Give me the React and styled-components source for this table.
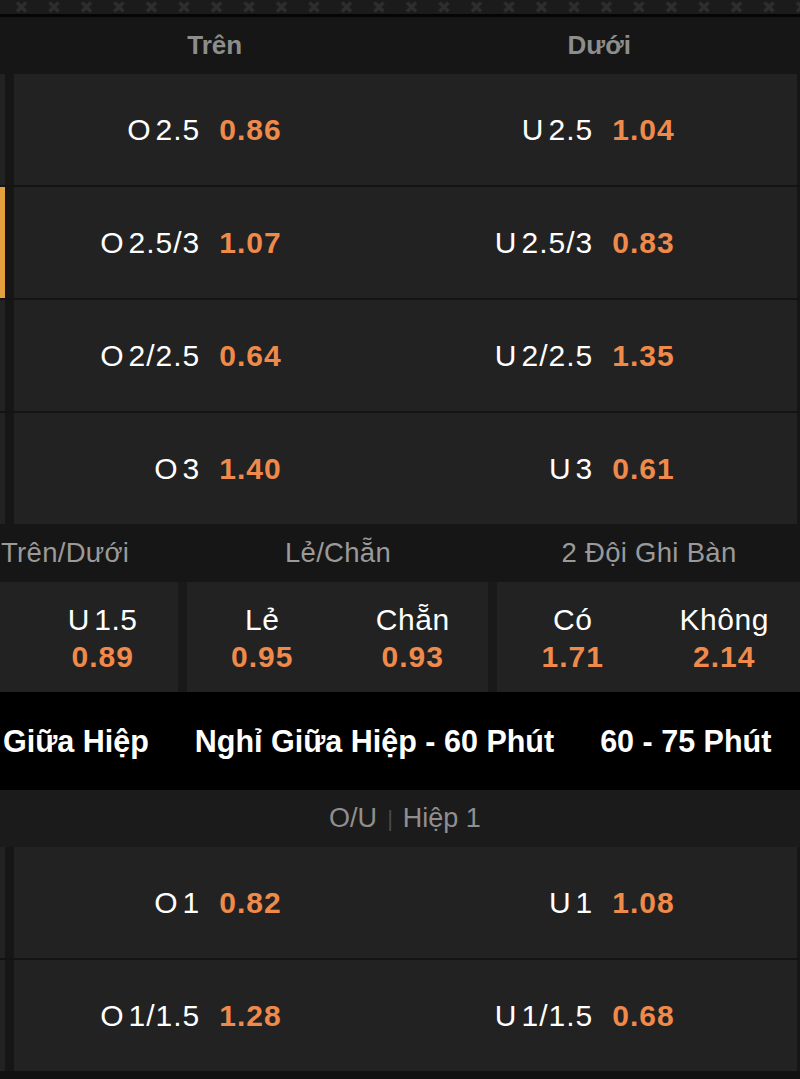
import React from "react";
import styled, { createGlobalStyle } from "styled-components";

const Global = createGlobalStyle`
  html, body { margin: 0; padding: 0; background: #111111; }
  body { overflow-x: hidden; font-family: "Liberation Sans", Arial, "Noto Sans", sans-serif; }
  #root { width: 800px; overflow: hidden; }
`;

const Page = styled.div`
  width: 800px;
  display: flex;
  flex-direction: column;
  background: #121212;
  overflow: hidden;
`;

const Stripe = styled.div`
  height: 14px;
  background: #1b1b1b;
  border-bottom: 3px solid #050505;
  display: flex;
  overflow: hidden;
`;

const PanelHeader = styled.div`
  height: 57px;
  background: #161616;
  display: grid;
  grid-template-columns: 1fr 1fr;
  padding-left: 14px;
  padding-right: 3px;
  align-items: center;
`;

const HeaderTitle = styled.div`
  text-align: center;
  color: #8d8d8d;
  font-weight: 700;
  font-size: 26px;
  padding-left: ${(p) => p.$shift || 0}px;
  padding-right: ${(p) => p.$pull || 0}px;
`;

const RowList = styled.div`
  display: flex;
  flex-direction: column;
  gap: 2px;
  background: #141414;
`;

const OddsRow = styled.div`
  height: 111px;
  display: grid;
  grid-template-columns: 5px 1fr;
  column-gap: 9px;
  padding-right: 3px;
  background: #161616;
`;

const SideMark = styled.div`
  background: ${(p) => (p.$active ? "#e3a23d" : "#222222")};
`;

const RowCell = styled.div`
  background: #222222;
  display: grid;
  grid-template-columns: 1fr 1fr;
  align-items: center;
`;

const Pick = styled.div`
  display: grid;
  grid-template-columns: 1fr 1fr;
  column-gap: 19px;
  align-items: center;
  padding-left: ${(p) => p.$pad || 0}px;
`;

const Line = styled.span`
  text-align: right;
  color: #ffffff;
  font-size: 30px;
  letter-spacing: 1px;
`;

const Side = styled.span`
  margin-right: 4px;
`;

const Price = styled.span`
  text-align: left;
  color: #ef8a4b;
  font-size: 30px;
  font-weight: 700;
  letter-spacing: 1px;
`;

const MarketHeader = styled.div`
  height: 58px;
  background: #161616;
  display: grid;
  grid-template-columns: 178px 1fr 1fr;
  column-gap: 9px;
  align-items: center;
`;

const MarketTitle = styled.div`
  color: #9a9a9a;
  font-size: 27.5px;
  letter-spacing: 0.3px;
  white-space: nowrap;
  text-align: ${(p) => p.$align || "center"};
  padding-left: ${(p) => (p.$align === "left" ? 1 : 0)}px;
`;

const MarketRow = styled.div`
  height: 110px;
  background: #191919;
  overflow: hidden;
`;

const MarketGrid = styled.div`
  width: 923px;
  margin-left: -123px;
  height: 100%;
  display: grid;
  grid-template-columns: 301px 301px 303px;
  column-gap: 9px;
`;

const MarketCell = styled.div`
  background: #222222;
  display: grid;
  grid-template-columns: 1fr 1fr;
  align-items: center;
`;

const Option = styled.div`
  display: flex;
  flex-direction: column;
  align-items: center;
  line-height: 37px;
  padding-top: 2px;
`;

const OptionName = styled.span`
  color: #ffffff;
  font-size: 30px;
  letter-spacing: 0.6px;
`;

const OptionPrice = styled.span`
  color: #ef8a4b;
  font-size: 30px;
  font-weight: 700;
  letter-spacing: 1px;
`;

const Tabs = styled.div`
  height: 98px;
  background: #000000;
  display: flex;
  align-items: center;
  gap: 46px;
  padding-left: 3px;
  white-space: nowrap;
`;

const Tab = styled.span`
  color: #ffffff;
  font-size: 30.5px;
  font-weight: 700;
`;

const SubHeader = styled.div`
  height: 57px;
  background: #1b1b1b;
  display: flex;
  align-items: center;
  justify-content: center;
  gap: 10px;
  padding-left: 10px;
  color: #8f8f8f;
  font-size: 27px;
`;

const Divider = styled.span`
  color: #4a4a4a;
  font-size: 22px;
`;

const Bottom = styled.div`
  height: 10px;
  background: #111111;
`;

function CrossStripe() {
  return (
    <Stripe>
      <svg width="800" height="14" viewBox="0 0 800 14">
        <defs>
          <pattern id="x" width="32.5" height="14" patternUnits="userSpaceOnUse" x="5">
            <path d="M12 2.5 L21 11.5 M21 2.5 L12 11.5" stroke="#2e2e2e" strokeWidth="3.2" />
          </pattern>
        </defs>
        <rect width="800" height="14" fill="url(#x)" />
      </svg>
    </Stripe>
  );
}

const main = [
  { o: "2.5", op: "0.86", u: "2.5", up: "1.04" },
  { o: "2.5/3", op: "1.07", u: "2.5/3", up: "0.83", active: true },
  { o: "2/2.5", op: "0.64", u: "2/2.5", up: "1.35" },
  { o: "3", op: "1.40", u: "3", up: "0.61" },
];

const firstHalf = [
  { o: "1", op: "0.82", u: "1", up: "1.08" },
  { o: "1/1.5", op: "1.28", u: "1/1.5", up: "0.68" },
];

function Rows({ data }) {
  return (
    <RowList>
      {data.map((r) => (
        <OddsRow key={r.o}>
          <SideMark $active={r.active} />
          <RowCell>
            <Pick>
              <Line>
                <Side>O</Side>
                {r.o}
              </Line>
              <Price>{r.op}</Price>
            </Pick>
            <Pick $pad={3}>
              <Line>
                <Side>U</Side>
                {r.u}
              </Line>
              <Price>{r.up}</Price>
            </Pick>
          </RowCell>
        </OddsRow>
      ))}
    </RowList>
  );
}

const markets = [
  [null, ["U", "1.5", "0.89"]],
  [
    ["", "Lẻ", "0.95"],
    ["", "Chẵn", "0.93"],
  ],
  [
    ["", "Có", "1.71"],
    ["", "Không", "2.14"],
  ],
];

export default function App() {
  return (
    <Page>
      <Global />
      <CrossStripe />
      <PanelHeader>
        <HeaderTitle $shift={10}>Trên</HeaderTitle>
        <HeaderTitle $pull={4}>Dưới</HeaderTitle>
      </PanelHeader>
      <Rows data={main} />
      <MarketHeader>
        <MarketTitle $align="left">Trên/Dưới</MarketTitle>
        <MarketTitle>Lẻ/Chẵn</MarketTitle>
        <MarketTitle>2 Đội Ghi Bàn</MarketTitle>
      </MarketHeader>
      <MarketRow>
        <MarketGrid>
          {markets.map((m, i) => (
            <MarketCell key={i}>
              {m.map((opt, j) =>
                opt ? (
                  <Option key={j}>
                    <OptionName>
                      {opt[0] && <Side>{opt[0]}</Side>}
                      {opt[1]}
                    </OptionName>
                    <OptionPrice>{opt[2]}</OptionPrice>
                  </Option>
                ) : (
                  <Option key={j} />
                )
              )}
            </MarketCell>
          ))}
        </MarketGrid>
      </MarketRow>
      <Tabs>
        <Tab>Giữa Hiệp</Tab>
        <Tab>Nghỉ Giữa Hiệp - 60 Phút</Tab>
        <Tab>60 - 75 Phút</Tab>
      </Tabs>
      <SubHeader>
        <span>O/U</span>
        <Divider>|</Divider>
        <span>Hiệp 1</span>
      </SubHeader>
      <Rows data={firstHalf} />
      <Bottom />
    </Page>
  );
}
